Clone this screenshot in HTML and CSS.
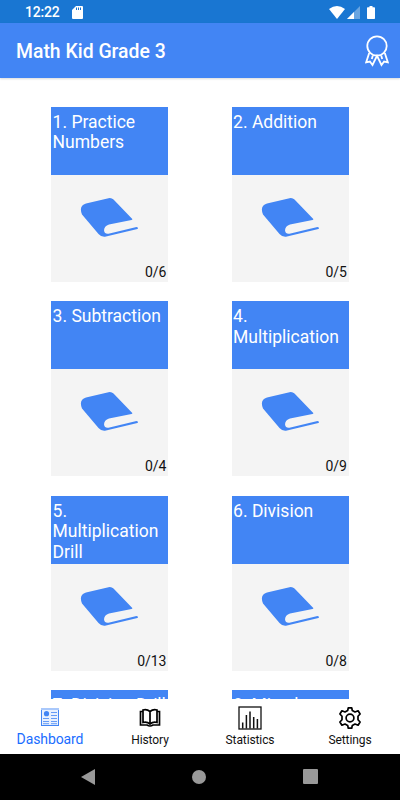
FILE: index.html
```html
<!DOCTYPE html>
<html lang="en">
<head>
    <meta charset="UTF-8">
    <meta name="viewport" content="width=device-width, initial-scale=1.0">
    <title>Math Kid Grade 3</title>
    <link rel="stylesheet" href="styles.css">
</head>
<body>
    <svg class="defs" width="0" height="0">
        <symbol id="book" viewBox="0 0 60 42">
            <path d="M6 6.500 L28.500 1.200 Q31.500 0.600 33.500 2.600 L52.300 22 Q52.500 22.700 51.500 22.900 L29 27.500 C23 29 22 37.500 28.500 36.700 L56.500 30 Q59 30.600 57.400 32 L26 39.500 Q21.500 40.500 18.500 37 L2 17.500 Q-1.500 8.800 6 6.500 Z" fill="#4285f4"/>
        </symbol>
    </svg>

    <div class="status-bar">
        <span class="time">12:22</span>
        <svg class="sd" width="11" height="13" viewBox="0 0 11 13">
            <path d="M4 0 H10 Q11 0 11 1 V12 Q11 13 10 13 H1 Q0 13 0 12 V4 Z" fill="#fff"/>
            <path d="M4.500 1.500 V4 M6.500 1.500 V4 M8.500 1.500 V4" stroke="#1976d2" stroke-width="1"/>
        </svg>
        <div class="status-icons">
            <svg width="16" height="13" viewBox="0 0 16 13"><path d="M0 3 Q8 -3 16 3 L8 13 Z" fill="#fff"/></svg>
            <svg width="13" height="13" viewBox="0 0 13 13">
                <path d="M0 13 L13 0 V13 Z" fill="#fff" opacity=".35"/>
                <path d="M0 13 L7 6 V13 Z" fill="#fff"/>
            </svg>
            <svg class="battery" width="8" height="13" viewBox="0 0 8 13"><path d="M2.500 0 H5.500 V1.300 H7.200 Q8 1.300 8 2 V12.300 Q8 13 7.200 13 H.8 Q0 13 0 12.300 V2 Q0 1.300 .8 1.300 H2.500 Z" fill="#fff"/></svg>
        </div>
    </div>

    <header class="app-bar">
        <h1>Math Kid Grade 3</h1>
        <svg class="award" width="24" height="32" viewBox="0 0 24 32" fill="none" stroke="#fff" stroke-width="1.800">
            <circle cx="12" cy="11" r="9.700"/>
            <path d="M4.200 18 L1.200 27.300 L4.900 26.500 L7.500 30 L12 20.800 L16.500 30 L19.100 26.500 L22.800 27.300 L19.800 18 M7.800 20.500 L6.800 24 M16.200 20.500 L17.200 24"/>
        </svg>
    </header>

    <main class="lessons">
        <div class="card">
            <h2>1. Practice Numbers</h2>
            <div class="card-body"><svg class="book"><use href="#book"/></svg><span class="score">0/6</span></div>
        </div>
        <div class="card">
            <h2>2. Addition</h2>
            <div class="card-body"><svg class="book"><use href="#book"/></svg><span class="score">0/5</span></div>
        </div>
        <div class="card">
            <h2>3. Subtraction</h2>
            <div class="card-body"><svg class="book"><use href="#book"/></svg><span class="score">0/4</span></div>
        </div>
        <div class="card">
            <h2>4. Multiplication</h2>
            <div class="card-body"><svg class="book"><use href="#book"/></svg><span class="score">0/9</span></div>
        </div>
        <div class="card">
            <h2>5. Multiplication Drill</h2>
            <div class="card-body"><svg class="book"><use href="#book"/></svg><span class="score">0/13</span></div>
        </div>
        <div class="card">
            <h2>6. Division</h2>
            <div class="card-body"><svg class="book"><use href="#book"/></svg><span class="score">0/8</span></div>
        </div>
        <div class="card">
            <h2 class="one-line">7. Division Drill</h2>
        </div>
        <div class="card">
            <h2 class="one-line">8. Mixed</h2>
        </div>
    </main>

    <nav class="tabs">
        <a class="tab active">
            <svg width="24" height="24" viewBox="0 0 24 24" fill="none" stroke="#4285f4">
                <rect x="3.500" y="3.500" width="17" height="17" stroke-width="1" fill="#e8f0fe"/>
                <path d="M3 4 H21" stroke="#a9c8fb" stroke-width="2"/>
                <circle cx="8.500" cy="8.700" r="2.600" fill="#4285f4" stroke="none"/>
                <path d="M13 7.500 H19 M13 10.500 H19 M5 13.500 H11 M13 13.500 H19 M5 16.500 H11 M13 16.500 H19 M5 18.700 H11 M13 18.700 H19" stroke-width=".8"/>
            </svg>
            <span>Dashboard</span>
        </a>
        <a class="tab">
            <svg width="24" height="24" viewBox="0 0 24 24" fill="none" stroke="#000" stroke-width="1.700">
                <path d="M12 5.500 Q9 3 5 4 V16.500 Q9 15.500 12 18 Q15 15.500 19 16.500 V4 Q15 3 12 5.500 V18"/>
                <path d="M5 5.500 H2.500 V19 H9 Q12 21 15 19 H21.500 V5.500 H19"/>
            </svg>
            <span>History</span>
        </a>
        <a class="tab">
            <svg width="24" height="24" viewBox="0 0 24 24" fill="none" stroke="#111">
                <rect x="1" y="1" width="22" height="22" stroke-width="1.300"/>
                <path d="M4.700 22.500 V16.500 M8.400 22.500 V9 M12 22.500 V5.500 M15.700 22.500 V11 M19.400 22.500 V13" stroke-width="1.500"/>
            </svg>
            <span>Statistics</span>
        </a>
        <a class="tab">
            <svg width="24" height="24" viewBox="0 0 24 24" fill="none" stroke="#000" stroke-width="1.700" stroke-linejoin="round">
                <circle cx="12" cy="12" r="3.900"/>
                <path d="M10.300 1.800 H13.700 L14.300 4.500 L17 6 L20.100 4.800 L22.100 8 L20 10.300 V13.700 L22.100 16 L20.100 19.200 L17 18 L14.300 19.500 L13.700 22.200 H10.300 L9.700 19.500 L7 18 L3.900 19.200 L1.900 16 L4 13.700 V10.300 L1.900 8 L3.900 4.800 L7 6 L9.700 4.500 Z"/>
            </svg>
            <span>Settings</span>
        </a>
    </nav>

    <div class="system-nav">
        <svg width="14" height="16" viewBox="0 0 14 16"><path d="M14 0 V16 L0 8 Z" fill="#999"/></svg>
        <svg width="14" height="14" viewBox="0 0 14 14"><circle cx="7" cy="7" r="7" fill="#999"/></svg>
        <svg width="15" height="15" viewBox="0 0 15 15"><rect width="15" height="15" rx="1" fill="#999"/></svg>
    </div>
</body>
</html>
```

FILE: styles.css
```css
* {
    box-sizing: border-box;
}

body {
    margin: 0;
    height: 800px;
    display: flex;
    flex-direction: column;
    overflow: hidden;
    font-family: Roboto, "Liberation Sans", sans-serif;
    background-color: #fff;
}

svg {
    display: block;
    flex-shrink: 0;
}

.defs {
    position: absolute;
}

.status-bar {
    display: flex;
    align-items: center;
    height: 23px;
    flex-shrink: 0;
    padding: 1px 25px 0;
    background-color: #1976d2;
    color: #fff;
}

.time {
    width: 35px;
    font-size: 14px;
    font-weight: 500;
    letter-spacing: -0.2px;
    line-height: 22px;
}

.sd {
    margin-left: 12px;
}

.status-icons {
    display: flex;
    margin-left: auto;
    gap: 2px;
}

.battery {
    margin-left: 5px;
}

.app-bar {
    display: flex;
    align-items: center;
    justify-content: space-between;
    height: 55px;
    flex-shrink: 0;
    padding: 0 11px 0 16px;
    background-color: #4285f4;
    color: #fff;
    box-shadow: 0 1px 2px rgba(0, 0, 0, 0.15);
}

.app-bar h1 {
    margin: 0;
    padding-top: 1px;
    font-size: 19.4px;
    font-weight: 500;
}

.lessons {
    flex: 1;
    min-height: 0;
    overflow: hidden;
    display: grid;
    grid-template-columns: 117px 117px;
    grid-auto-rows: 175px;
    column-gap: 63.5px;
    row-gap: 19.4px;
    padding: 29px 0 0 51.3px;
}

.card {
    background-color: #f4f4f4;
}

.card h2 {
    margin: 0;
    height: 68px;
    padding: 5px 1px 0 1.3px;
    background-color: #4285f4;
    color: #fff;
    font-size: 17.5px;
    font-weight: 400;
    line-height: 20.4px;
}

.card .one-line {
    white-space: nowrap;
    letter-spacing: -0.1px;
}

.card-body {
    display: flex;
    flex-direction: column;
    height: 107px;
    padding: 22px 2px 2px 29px;
}

.book {
    width: 60px;
    height: 42px;
}

.score {
    margin-top: auto;
    align-self: flex-end;
    font-size: 14px;
    letter-spacing: -0.1px;
    line-height: 16px;
    color: #111;
}

.tabs {
    display: flex;
    height: 54.5px;
    flex-shrink: 0;
    background-color: #fff;
}

.tab {
    flex: 1;
    display: flex;
    flex-direction: column;
    align-items: center;
    padding-top: 7px;
    font-size: 12px;
    letter-spacing: -0.1px;
    color: #111;
}

.tab span {
    margin-top: 2px;
    line-height: 16px;
}

.tab.active {
    font-size: 14px;
    color: #1a6dff;
}

.tab.active svg {
    margin-top: -1px;
}

.system-nav {
    display: flex;
    align-items: center;
    justify-content: space-between;
    height: 46.5px;
    flex-shrink: 0;
    padding: 0 82px 0 81px;
    background-color: #000;
}
```
